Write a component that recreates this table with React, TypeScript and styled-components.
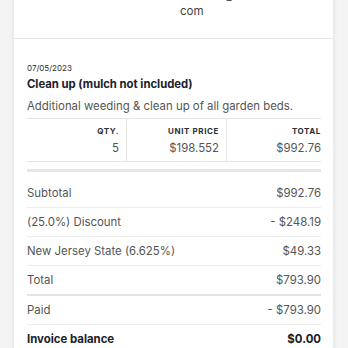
import React from "react";
import styled, { createGlobalStyle } from "styled-components";

const GlobalStyle = createGlobalStyle`
  html, body {
    margin: 0;
    padding: 0;
    background: #f4f4f4;
    font-family: Inter, "Noto Sans", sans-serif;
    -webkit-font-smoothing: antialiased;
  }
`;

interface ISummaryLine {
  label: string;
  value: string;
  strong?: boolean;
  thick?: boolean;
}

const summary: ISummaryLine[] = [
  { label: "Subtotal", value: "$992.76" },
  { label: "(25.0%) Discount", value: "- $248.19" },
  { label: "New Jersey State (6.625%)", value: "$49.33" },
  { label: "Total", value: "$793.90", thick: true },
  { label: "Paid", value: "- $793.90" },
  { label: "Invoice balance", value: "$0.00", strong: true },
];

export default function App() {
  return (
    <>
      <GlobalStyle />
      <Page>
        <Card>
          <Header>
            <HeaderLabel>Client Portal</HeaderLabel>
            <HeaderValue>
              Access @ www.mutualis.
              <br />
              com
            </HeaderValue>
          </Header>
          <LineItem>
            <ItemDate>07/05/2023</ItemDate>
            <ItemTitle>Clean up (mulch not included)</ItemTitle>
            <ItemDescription>
              Additional weeding &amp; clean up of all garden beds.
            </ItemDescription>
            <ItemTable>
              <Cell>
                <CellHead>Qty.</CellHead>
                <CellValue>5</CellValue>
              </Cell>
              <Cell>
                <CellHead>Unit price</CellHead>
                <CellValue>$198.552</CellValue>
              </Cell>
              <Cell $last>
                <CellHead>Total</CellHead>
                <CellValue>$992.76</CellValue>
              </Cell>
            </ItemTable>
            <ThickRule />
            <Summary>
              {summary.map((line) => (
                <SummaryRow key={line.label} $thick={line.thick}>
                  <SummaryText $strong={line.strong}>{line.label}</SummaryText>
                  <SummaryText $strong={line.strong}>{line.value}</SummaryText>
                </SummaryRow>
              ))}
            </Summary>
          </LineItem>
        </Card>
      </Page>
    </>
  );
}

const Page = styled.div`
  padding: 0 14px 0 13px;
  margin-top: -29px;
`;

const Card = styled.div`
  background: #fff;
  box-shadow: 0 0 4px rgba(0, 0, 0, 0.08);
  border-left: 1px solid #ececec;
  border-right: 1px solid #ececec;
`;

const Header = styled.div`
  display: grid;
  grid-template-columns: 153px 1fr;
  padding: 16px 0 19px 13px;
  border-bottom: 1px solid #e8e8e8;
  font-size: 11.6px;
  line-height: 16px;
  color: #444;
`;

const HeaderLabel = styled.div`
  color: #666;
`;

const HeaderValue = styled.div``;

const LineItem = styled.div`
  padding: 22px 12px 0 13px;
`;

const ItemDate = styled.div`
  font-size: 8px;
  line-height: 14px;
  color: #2a2f36;
`;

const ItemTitle = styled.div`
  font-size: 11.3px;
  line-height: 18px;
  font-weight: 700;
  color: #1a2029;
`;

const ItemDescription = styled.div`
  margin-top: 4px;
  font-size: 11.4px;
  line-height: 18px;
  color: #555;
`;

const ItemTable = styled.div`
  margin-top: 3px;
  display: grid;
  grid-template-columns: 100px 100px 1fr;
  border-top: 1px solid #e6e6e6;
  border-bottom: 1px solid #e6e6e6;
`;

const Cell = styled.div<{ $last?: boolean }>`
  text-align: right;
  padding: 6px ${(p) => (p.$last ? "0" : "7px")} 4px 0;
  border-right: ${(p) => (p.$last ? "none" : "1px solid #e6e6e6")};
`;

const CellHead = styled.div`
  font-size: 8px;
  line-height: 12px;
  font-weight: 700;
  letter-spacing: 0.6px;
  text-transform: uppercase;
  color: #2a2f36;
`;

const CellValue = styled.div`
  margin-top: 2px;
  font-size: 11.4px;
  line-height: 18px;
  color: #555;
`;

const ThickRule = styled.div`
  margin-top: 7px;
  height: 3px;
  background: #e6e6e6;
`;

const Summary = styled.div`
  margin-top: 7px;
`;

const SummaryRow = styled.div<{ $thick?: boolean }>`
  display: flex;
  justify-content: space-between;
  align-items: center;
  padding: 5px 0;
  border-bottom: ${(p) => (p.$thick ? "2px solid #e4e4e4" : "1px solid #ececec")};

  &:last-child {
    border-bottom: none;
  }
`;

const SummaryText = styled.span<{ $strong?: boolean }>`
  font-size: 11.4px;
  line-height: 18px;
  font-weight: ${(p) => (p.$strong ? 700 : 400)};
  color: ${(p) => (p.$strong ? "#1a2029" : "#555")};
`;
